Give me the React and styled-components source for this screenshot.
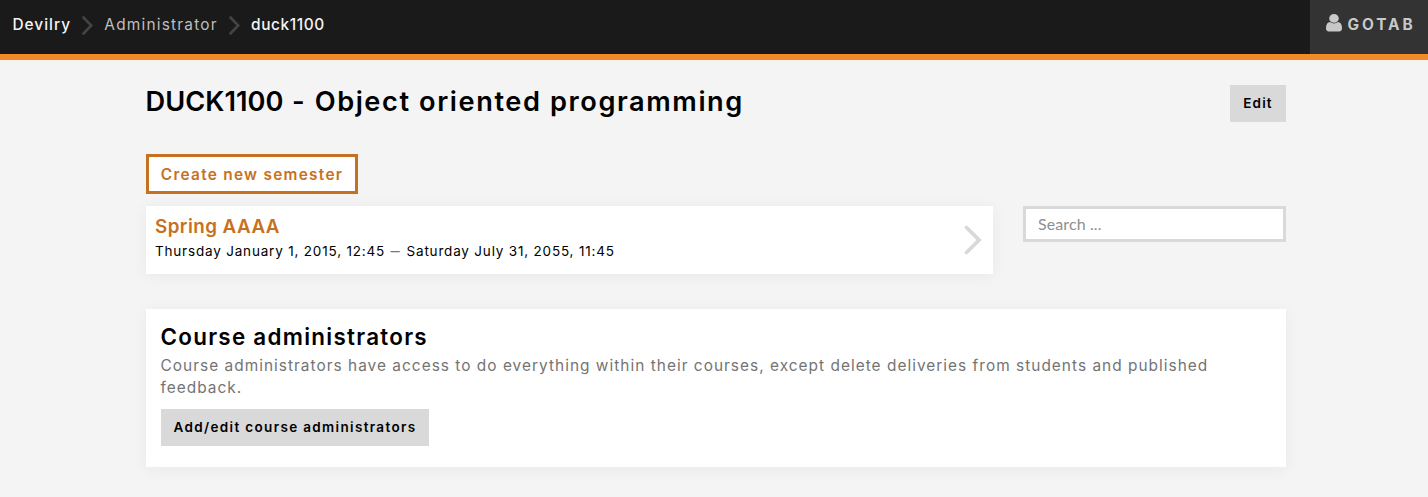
import React from 'react';
import styled, { createGlobalStyle } from 'styled-components';

const GlobalStyle = createGlobalStyle`
  *, *::before, *::after { box-sizing: border-box; }
  body {
    margin: 0;
    background: #f4f4f4;
    color: #000;
    font-family: Inter, "Liberation Sans", sans-serif;
    font-size: 15.4px;
  }
  h1, h2, h3, p { margin: 0; }
`;

const Page = styled.div`
  min-height: 497px;
  overflow: hidden;
`;

const Navbar = styled.header`
  display: flex;
  justify-content: space-between;
  height: 60px;
  background: #1a1a1a;
  border-bottom: 6px solid #f18a27;
`;

const Breadcrumb = styled.nav`
  display: flex;
  align-items: center;
  height: 50px;
  padding-left: 12.5px;
`;

const Crumb = styled.a`
  color: ${(p) => (p.$muted ? '#bfbfbf' : '#f4f4f4')};
  font-weight: ${(p) => (p.$muted ? 400 : 500)};
  letter-spacing: ${(p) => p.$spacing};
  line-height: 24px;
`;

const CrumbArrow = styled.svg`
  width: 11px;
  height: 19px;
  margin: 0 11.3px 0 11px;
  fill: none;
  stroke: #444;
  stroke-width: 2.6;
  stroke-linecap: round;
`;

const UserMenu = styled.a`
  display: flex;
  align-items: flex-start;
  width: 118px;
  height: 54px;
  padding: 13px 0 0 16px;
  background: #333;
  color: #c8c8c8;
  font-weight: 700;
  letter-spacing: 2.9px;
  line-height: 24px;
`;

const UserIcon = styled.svg`
  width: 16px;
  height: 17.5px;
  margin: 1px 5.5px 0 0;
  fill: currentColor;
`;

const Container = styled.main`
  width: 1140px;
  margin-left: 146px;
`;

const TitleRow = styled.div`
  display: flex;
  justify-content: space-between;
  align-items: flex-start;
  height: 62px;
  padding-top: 25px;
`;

const Title = styled.h1`
  font-size: 27.2px;
  font-weight: 600;
  letter-spacing: 1.58px;
  line-height: 34px;
  margin-left: -0.5px;
`;

const CourseCode = styled.span`
  letter-spacing: 0.05px;
`;

const Button = styled.button`
  display: block;
  width: ${(p) => p.$width};
  height: 37px;
  padding: 0 0 1px;
  border: 0;
  background: #d9d9d9;
  color: #000;
  font: 600 13.5px Inter, "Liberation Sans", sans-serif;
  letter-spacing: ${(p) => p.$spacing};
  white-space: nowrap;
`;

const OutlineButton = styled(Button)`
  height: 40px;
  margin-top: 32px;
  border: 3px solid #c77120;
  background: #fff;
  color: #c77120;
  font-size: 15.4px;
  padding: 0;
`;

const Columns = styled.div`
  display: flex;
  align-items: flex-start;
  gap: 30px;
  margin-top: 12px;
`;

const Card = styled.section`
  background: #fff;
  box-shadow: 0 2px 15px rgba(0, 0, 0, 0.05);
`;

const SemesterItem = styled(Card)`
  display: flex;
  justify-content: space-between;
  align-items: center;
  width: 847px;
  height: 68px;
  padding: 0 11px 0 9px;
`;

const SemesterText = styled.div`
  align-self: flex-start;
  padding-top: 8px;
`;

const SemesterName = styled.h3`
  color: #c77120;
  font-size: 18.8px;
  font-weight: 600;
  letter-spacing: 0.45px;
  line-height: 26px;
`;

const SemesterDates = styled.p`
  font-size: 13.5px;
  letter-spacing: 0.81px;
  line-height: 20px;
  margin-top: 1px;
  white-space: nowrap;
`;

const Dash = styled.span`
  color: #777;
  font-family: Lato, sans-serif;
  font-weight: 700;
  letter-spacing: 1.5px;
`;

const ItemArrow = styled.svg`
  width: 18px;
  height: 30px;
  fill: none;
  stroke: #d9d9d9;
  stroke-width: 3.8;
  stroke-linecap: round;
`;

const SearchInput = styled.input`
  width: 263px;
  height: 36px;
  padding: 0 12px 2px;
  border: 3px solid #d9d9d9;
  border-radius: 0;
  background: #fff;
  font: 16px Lato, sans-serif;
  letter-spacing: 0.1px;
  &::placeholder { color: #8f8f8f; opacity: 1; }
`;

const AdminPanel = styled(Card)`
  height: 158px;
  margin-top: 35px;
  padding: 14px 15px 0;
`;

const PanelHeading = styled.h2`
  font-size: 22.4px;
  font-weight: 600;
  letter-spacing: 1.28px;
  line-height: 28px;
  margin-left: -0.5px;
`;

const PanelText = styled.p`
  color: #747474;
  letter-spacing: 1.03px;
  line-height: 22px;
  margin: 4px 0 10px -0.5px;
`;

export default function App() {
  return (
    <Page>
      <GlobalStyle />
      <Navbar>
        <Breadcrumb>
          <Crumb $spacing="1px">Devilry</Crumb>
          <CrumbArrow viewBox="0 0 11 19"><path d="M1.5 1.5 9.3 9.5 1.5 17.5" /></CrumbArrow>
          <Crumb $muted $spacing="1.22px">Administrator</Crumb>
          <CrumbArrow viewBox="0 0 11 19"><path d="M1.5 1.5 9.3 9.5 1.5 17.5" /></CrumbArrow>
          <Crumb $spacing="0.6px">duck1100</Crumb>
        </Breadcrumb>
        <UserMenu>
          <UserIcon viewBox="0 128 1280 1536" preserveAspectRatio="none">
            <path d="M1280 1399q0 109-62.500 187T1067 1664H213q-88 0-150.500-78T0 1399q0-85 8.500-160.500t31.500-152T98.500 955.500t94-89T327 832q131 128 313 128t313-128q76 0 134.500 34.500t94 89 58.500 131 31.500 152T1280 1399zM1024 512q0 159-112.500 271.500T640 896 368.500 783.500 256 512t112.500-271.500T640 128t271.500 112.500T1024 512z" />
          </UserIcon>
          GOTAB
        </UserMenu>
      </Navbar>
      <Container>
        <TitleRow>
          <Title><CourseCode>DUCK1100</CourseCode> - Object oriented programming</Title>
          <Button $width="56px" $spacing="1.1px">Edit</Button>
        </TitleRow>
        <OutlineButton $width="212px" $spacing="1.28px">Create new semester</OutlineButton>
        <Columns>
          <SemesterItem>
            <SemesterText>
              <SemesterName>Spring AAAA</SemesterName>
              <SemesterDates>
                Thursday January 1, 2015, 12:45 <Dash>—</Dash> Saturday July 31, 2055, 11:45
              </SemesterDates>
            </SemesterText>
            <ItemArrow viewBox="0 0 18 30"><path d="M2.500 2.500 15 15 2.500 27.500" /></ItemArrow>
          </SemesterItem>
          <SearchInput placeholder="Search ..." aria-label="Search" />
        </Columns>
        <AdminPanel>
          <PanelHeading>Course administrators</PanelHeading>
          <PanelText>
            Course administrators have access to do everything within their courses, except delete
            deliveries from students and published feedback.
          </PanelText>
          <Button $width="268px" $spacing="1.34px">Add/edit course administrators</Button>
        </AdminPanel>
      </Container>
    </Page>
  );
}
